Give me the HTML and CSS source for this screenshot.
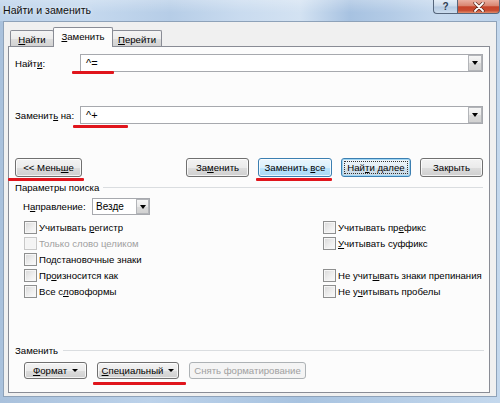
FILE: index.html
```html
<!DOCTYPE html>
<html lang="ru">
<head>
<meta charset="utf-8">
<title>Найти и заменить</title>
<link rel="stylesheet" href="styles.css">
</head>
<body>
<div class="titlebar">
  <span class="title">Найти и заменить</span>
  <div class="caption">
    <span class="cbtn help">?</span>
    <span class="cbtn close">
      <svg width="14" height="10" viewBox="0 0 14 10"><path d="M3 1 L11 9 M11 1 L3 9" stroke="#5a2418" stroke-width="3.2" stroke-linecap="round"/><path d="M3 1 L11 9 M11 1 L3 9" stroke="#fff" stroke-width="1.8" stroke-linecap="round"/></svg>
    </span>
  </div>
</div>
<div class="client">
  <div class="tabs">
    <div class="tab tab-find"><span><u>Н</u>айти</span></div>
    <div class="tab tab-replace active"><span><u>З</u>аменить</span></div>
    <div class="tab tab-goto"><span><u>П</u>ерейти</span></div>
  </div>
  <div class="panel">
    <div class="field-row">
      <span class="field-label">Найт<u>и</u>:</span>
      <div class="combo mark mark-find"><span class="combo-text">^=</span><span class="drop"><i class="tri"></i></span></div>
    </div>
    <div class="field-row gap-row">
      <span class="field-label">Заменит<u>ь</u> на:</span>
      <div class="combo mark mark-repl"><span class="combo-text">^+</span><span class="drop"><i class="tri"></i></span></div>
    </div>
    <div class="btn-row">
      <button class="btn btn-less mark mark-less"><span>&lt;&lt; Мень<u>ш</u>е</span></button>
      <div class="btn-group">
        <button class="btn btn-repl"><span>За<u>м</u>енить</span></button>
        <button class="btn btn-all hover mark mark-all"><span>Заменить <u>в</u>се</span></button>
        <button class="btn btn-next default"><span class="focus">Най<u>т</u>и далее</span></button>
        <button class="btn btn-close"><span>Закрыть</span></button>
      </div>
    </div>
    <div class="group group-params">
      <span>Параметры поиска</span><span class="group-line"></span>
    </div>
    <div class="dir-row">
      <span class="dir-label">Н<u>а</u>правление:</span>
      <div class="select"><span class="combo-text">Везде</span><span class="drop"><i class="tri"></i></span></div>
    </div>
    <div class="opts">
      <div class="chk"><span class="box"></span><span>Учитывать <u>р</u>егистр</span></div>
      <div class="chk"><span class="box"></span><span>Учитывать пр<u>е</u>фикс</span></div>
      <div class="chk disabled"><span class="box"></span><span>Только слово целиком</span></div>
      <div class="chk"><span class="box"></span><span><u>У</u>читывать суффикс</span></div>
      <div class="chk"><span class="box"></span><span>Подстановочные знаки</span></div>
      <div class="chk empty"></div>
      <div class="chk"><span class="box"></span><span>Пр<u>о</u>износится как</span></div>
      <div class="chk"><span class="box"></span><span>Не учит<u>ы</u>вать знаки препинания</span></div>
      <div class="chk"><span class="box"></span><span>Все с<u>л</u>овоформы</span></div>
      <div class="chk"><span class="box"></span><span>Не у<u>ч</u>итывать пробелы</span></div>
    </div>
    <div class="bottom">
      <div class="group group-replace">
        <span>Заменить</span><span class="group-line"></span>
      </div>
      <div class="bottom-btns">
        <button class="btn btn-format"><span><u>Ф</u>ормат</span><i class="tri small"></i></button>
        <button class="btn btn-special mark mark-special"><span><u>С</u>пециальный</span><i class="tri small"></i></button>
        <button class="btn btn-clear disabled"><span>Снять форматирование</span></button>
      </div>
    </div>
  </div>
</div>
</body>
</html>
```

FILE: styles.css
```css
* { box-sizing: border-box; }
html, body { margin: 0; padding: 0; }
body {
  width: 500px;
  height: 403px;
  overflow: hidden;
  font-family: "Liberation Sans", Arial, sans-serif;
  font-size: 9.6px;
  color: #000;
  background: linear-gradient(to right, #a9c1dc 0%, #bcd2ea 30%, #a8c3e0 60%, #c4d8ed 100%);
  display: flex;
  flex-direction: column;
}
u { text-decoration: underline; text-underline-offset: 1px; }

/* title bar */
.titlebar {
  height: 21px;
  flex: none;
  display: flex;
  justify-content: space-between;
  align-items: flex-start;
  background:
    linear-gradient(rgba(255,255,255,0.25), rgba(255,255,255,0) 60%),
    linear-gradient(to right, #bcd2ea 0%, #c4d8ee 18%, #b6cde7 34%, #c9dbef 48%, #d3e2f2 60%, #a7c2e1 70%, #b3cbe6 78%, #c6d9ee 88%, #bdd3eb 100%);
}
.title {
  font-size: 10.6px;
  padding: 4px 0 0 3px;
  color: #111;
  text-shadow: 0 0 4px rgba(255,255,255,0.9);
}
.caption { display: flex; }
.cbtn {
  height: 14px;
  border: 1px solid #56667c;
  border-top: none;
  display: flex;
  align-items: center;
  justify-content: center;
}
.help {
  width: 24px;
  border-right: none;
  border-radius: 0 0 0 4px;
  background: linear-gradient(#e4edf7 0%, #cad9ea 48%, #b4c9e1 52%, #cbdcee 100%);
  color: #2e3d52;
  font-weight: bold;
  font-size: 10px;
  line-height: 1;
}
.close {
  width: 43px;
  border-radius: 0 0 4px 0;
  background: linear-gradient(#eab0a2 0%, #d98570 45%, #c6432a 52%, #c84b30 80%, #e08c6c 100%);
}

/* client */
.client {
  margin: 0 3px;
  height: 376px;
  flex: none;
  border: 1px solid #8ea2b9;
  background: #f0f0f0;
  padding: 5px 6px 3px 4px;
  display: flex;
  flex-direction: column;
}

/* tabs */
.tabs {
  display: flex;
  align-items: flex-end;
  height: 19px;
  margin-left: 2px;
  position: relative;
  z-index: 1;
}
.tab {
  height: 16px;
  border: 1px solid #898c95;
  border-bottom: none;
  border-radius: 2px 2px 0 0;
  background: linear-gradient(#f4f4f4 0%, #ececec 50%, #dedede 51%, #d2d2d2 100%);
  display: flex;
  align-items: center;
  justify-content: center;
  padding-top: 1px;
}
.tab-find { width: 44px; margin-right: -1px; }
.tab-replace { width: 60px; margin-right: -1px; }
.tab-goto { width: 50px; }
.tab.active {
  height: 20px;
  margin-bottom: -1px;
  background: #fcfcfc;
  position: relative;
  z-index: 2;
  padding-top: 0;
  padding-bottom: 2px;
}

/* panel */
.panel {
  height: 347px;
  flex: none;
  border: 1px solid #898c95;
  background: #fcfcfc;
  padding: 7px 6px 13px 6px;
  display: flex;
  flex-direction: column;
}
.field-row {
  display: flex;
  align-items: center;
  height: 18px;
}
.gap-row { margin-top: 34px; }
.field-label { width: 65px; flex: none; }
.combo {
  flex: 1;
  height: 18px;
  border: 1px solid #a7a9ae;
  background: #fff;
  display: flex;
  align-items: center;
}
.combo-text { flex: 1; padding-left: 5px; font-size: 11px; }
.drop {
  width: 14px;
  height: 16px;
  flex: none;
  border: 1px solid #b3b5b9;
  background: linear-gradient(#f6f6f6 0%, #e9e9e9 50%, #dadada 51%, #d2d2d2 100%);
  display: flex;
  align-items: center;
  justify-content: center;
}
.tri {
  width: 0;
  height: 0;
  border-left: 3.5px solid transparent;
  border-right: 3.5px solid transparent;
  border-top: 4px solid #000;
}
.tri.small {
  border-left-width: 3px;
  border-right-width: 3px;
  border-top-width: 3px;
  margin-left: 5px;
}

/* buttons */
.btn-row {
  display: flex;
  justify-content: space-between;
  height: 19px;
  margin-top: 34px;
}
.btn-group { display: flex; gap: 9px; }
.btn {
  font: inherit;
  color: #000;
  height: 19px;
  padding: 0;
  border: 1px solid #707070;
  border-radius: 3px;
  background: linear-gradient(#f3f3f3 0%, #ebebeb 50%, #dddddd 51%, #cfcfcf 100%);
  box-shadow: inset 0 0 0 1px rgba(255,255,255,0.75);
  display: flex;
  align-items: center;
  justify-content: center;
  position: relative;
  white-space: nowrap;
}
.btn-less { width: 67px; }
.btn-repl { width: 63px; }
.btn-all { width: 74px; }
.btn-next { width: 70px; }
.btn-close { width: 63px; }
.btn.hover {
  border-color: #3c7fb1;
  background: linear-gradient(#eaf6fd 0%, #d9f0fc 50%, #bee6fd 51%, #a7d9f5 100%);
}
.btn.default {
  border-color: #3c7fb1;
  box-shadow: inset 0 0 0 1px #9fd6f4;
  background: linear-gradient(#eef5fa 0%, #e4eef5 50%, #d3e2ec 51%, #c9d9e5 100%);
}
.focus {
  border: 1px dotted #333;
  padding: 0 2px;
  line-height: 11px;
}
.btn.disabled {
  border-color: #adb2b5;
  background: #f4f4f4;
  box-shadow: none;
  color: #a0a0a0;
}

/* red annotation marks */
.mark { position: relative; }
.mark::after {
  content: "";
  position: absolute;
  height: 3px;
  background: #e0151c;
  border-radius: 1px;
  z-index: 5;
}
.mark-find::after { left: -9px; top: 16px; width: 42px; }
.mark-repl::after { left: -8px; top: 18px; width: 55px; }
.mark-less::after { left: -8px; top: 19px; width: 76px; }
.mark-all::after { left: -3px; top: 19px; width: 76px; }
.mark-special::after { left: -5px; top: 19px; width: 93px; }

/* groups */
.group {
  display: flex;
  align-items: center;
  height: 12px;
}
.group-params { margin-top: 4px; }
.group-line {
  flex: 1;
  height: 1px;
  background: #dadde0;
  margin-left: 4px;
}
.group-replace .group-line { margin-left: 5px; margin-right: -1px; }

.dir-row {
  display: flex;
  align-items: center;
  height: 17px;
  margin-top: 5px;
  padding-left: 8px;
}
.dir-label { width: 69px; flex: none; }
.select {
  width: 58px;
  height: 17px;
  border: 1px solid #a7a9ae;
  background: #fff;
  display: flex;
  align-items: center;
}
.select .combo-text { padding-left: 3px; font-size: 10px; }
.select .drop { width: 13px; height: 15px; }

.opts {
  display: grid;
  grid-template-columns: 299px 1fr;
  grid-auto-rows: 16px;
  margin-top: 4px;
  padding-left: 9px;
}
.chk { display: flex; align-items: center; white-space: nowrap; }
.box {
  width: 13px;
  height: 13px;
  flex: none;
  border: 1px solid #8e8f8f;
  background: linear-gradient(135deg, #d8d8d8 0%, #f0f0f0 60%, #fbfbfb 100%);
  box-shadow: inset 0 0 0 1px #f6f6f6;
  margin-right: 2px;
}
.chk.disabled { color: #a0a0a0; }
.chk.disabled .box { border-color: #c8c8c8; background: #f4f4f4; }

.bottom { margin-top: auto; }
.bottom-btns {
  display: flex;
  gap: 10px;
  margin-top: 6px;
  padding-left: 9px;
}
.bottom-btns .btn { height: 17px; }
.btn-format { width: 63px; }
.btn-special { width: 82px; }
.btn-clear { width: 117px; }
```
